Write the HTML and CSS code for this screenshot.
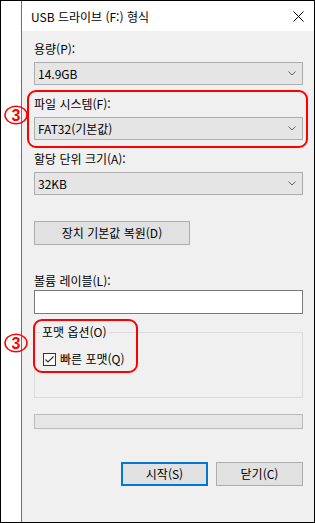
FILE: index.html
```html
<!DOCTYPE html>
<html lang="ko">
<head>
  <meta charset="UTF-8">
  <meta name="viewport" content="width=device-width, initial-scale=1.0">
  <title>USB 드라이브 (F:) 형식</title>
  <link rel="stylesheet" href="styles.css">
</head>
<body>
  <div class="frame">
    <div class="gutter"></div>

    <div class="window">
      <div class="titlebar">
        <span class="title">USB 드라이브 (F:) 형식</span>
        <svg class="close" width="11" height="11" viewBox="0 0 11 11">
          <path d="M0.5 0.5 L10.5 10.5 M10.5 0.5 L0.5 10.5" stroke="#000" stroke-width="1" fill="none"/>
        </svg>
      </div>

      <div class="content">
        <div class="field">
          <div class="label">용량(P):</div>
          <div class="combo">
            <span>14.9GB</span>
            <svg class="chevron" width="8" height="5" viewBox="0 0 8 5"><path d="M0.5 0.5 L4 4 L7.5 0.5" stroke="#606060" fill="none"/></svg>
          </div>
        </div>

        <div class="field">
          <div class="label">파일 시스템(F):</div>
          <div class="combo">
            <span>FAT32(기본값)</span>
            <svg class="chevron" width="8" height="5" viewBox="0 0 8 5"><path d="M0.5 0.5 L4 4 L7.5 0.5" stroke="#606060" fill="none"/></svg>
          </div>
        </div>

        <div class="field">
          <div class="label">할당 단위 크기(A):</div>
          <div class="combo">
            <span>32KB</span>
            <svg class="chevron" width="8" height="5" viewBox="0 0 8 5"><path d="M0.5 0.5 L4 4 L7.5 0.5" stroke="#606060" fill="none"/></svg>
          </div>
        </div>

        <button class="btn restore">장치 기본값 복원(D)</button>

        <div class="label volume-label">볼륨 레이블(L):</div>
        <div class="textbox"></div>

        <fieldset class="group">
          <legend>포맷 옵션(O)</legend>
          <div class="check-row">
            <span class="checkbox">
              <svg width="11" height="11" viewBox="0 0 11 11"><path d="M1.5 5.5 L4 8 L9.5 2.5" stroke="#333" stroke-width="1.2" fill="none"/></svg>
            </span>
            <span>빠른 포맷(Q)</span>
          </div>
        </fieldset>

        <div class="progress"></div>

        <div class="actions">
          <button class="btn primary">시작(S)</button>
          <button class="btn">닫기(C)</button>
        </div>
      </div>
    </div>

    <!-- annotation marks -->
    <div class="mark mark-fs"></div>
    <div class="mark mark-options"></div>
    <svg class="badge badge-fs" width="24" height="20" viewBox="0 0 24 20">
      <ellipse cx="12" cy="10" rx="11" ry="8.8" stroke="#f00" stroke-width="1.5" fill="none"/>
      <text x="12" y="15.5" text-anchor="middle">3</text>
    </svg>
    <svg class="badge badge-options" width="24" height="20" viewBox="0 0 24 20">
      <ellipse cx="12" cy="10" rx="11" ry="8.8" stroke="#f00" stroke-width="1.5" fill="none"/>
      <text x="12" y="15.5" text-anchor="middle">3</text>
    </svg>
  </div>
</body>
</html>
```

FILE: styles.css
```css
html, body {
  margin: 0;
  padding: 0;
}

body {
  font-family: "Noto Sans CJK KR", "Liberation Sans", sans-serif;
  font-size: 12px;
  color: #000;
  background-color: #fff;
}

.frame {
  position: relative;
  width: 315px;
  height: 523px;
  box-sizing: border-box;
  border: 1px solid #000;
  display: flex;
  background-color: #fff;
}

.gutter {
  width: 20px;
  flex-shrink: 0;
}

.window {
  flex: 1;
  display: flex;
  flex-direction: column;
  border-left: 1px solid #6f6f6f;
  background-color: #f0f0f0;
}

.titlebar {
  height: 30px;
  display: flex;
  align-items: center;
  justify-content: space-between;
  padding: 1px 10px 0 9px;
  box-sizing: border-box;
  background-color: #fff;
}

.title {
  line-height: 16px;
}

.close {
  display: block;
}

.content {
  flex: 1;
  display: flex;
  flex-direction: column;
  padding: 10px 11px 0 12px;
}

.label {
  line-height: 16px;
  height: 16px;
}

.field + .field {
  margin-top: 11px;
}

.combo {
  margin-top: 5px;
  height: 23px;
  box-sizing: border-box;
  border: 1px solid #adadad;
  background-color: #e5e5e5;
  display: flex;
  align-items: center;
  justify-content: space-between;
  padding: 0 6px 0 3px;
  line-height: 16px;
}

.chevron {
  display: block;
}

.btn {
  font-family: inherit;
  font-size: 12px;
  color: #000;
  height: 24px;
  padding: 0;
  box-sizing: border-box;
  border: 1px solid #adadad;
  background-color: #e1e1e1;
  line-height: 16px;
}

.restore {
  align-self: flex-start;
  margin-top: 26px;
  width: 156px;
}

.volume-label {
  margin-top: 28px;
}

.textbox {
  margin-top: 1px;
  height: 24px;
  box-sizing: border-box;
  border: 1px solid #7a7a7a;
  background-color: #fff;
}

.group {
  margin: 10px 0 0 0;
  padding: 11px 5px 30px 5px;
  border: 1px solid #dcdcdc;
  min-width: 0;
}

.group legend {
  padding: 0 2px;
  line-height: 16px;
}

.check-row {
  display: flex;
  align-items: center;
  gap: 4px;
  margin-left: 3px;
  line-height: 16px;
}

.checkbox {
  width: 13px;
  height: 13px;
  box-sizing: border-box;
  border: 1px solid #333;
  background-color: #fff;
  display: flex;
  align-items: center;
  justify-content: center;
}

.checkbox svg {
  display: block;
}

.progress {
  margin-top: 16px;
  height: 15px;
  box-sizing: border-box;
  border: 1px solid #bcbcbc;
  background-color: #e6e6e6;
}

.actions {
  margin-top: 33px;
  display: flex;
  justify-content: flex-end;
  gap: 8px;
}

.actions .btn {
  width: 87px;
}

.btn.primary {
  border: 2px solid #0078d7;
}

/* red annotation marks */
.mark {
  position: absolute;
  box-sizing: border-box;
  border: 2px solid #f00;
  border-radius: 9px;
}

.mark-fs {
  left: 26px;
  top: 89px;
  width: 281px;
  height: 58px;
}

.mark-options {
  left: 32px;
  top: 318px;
  width: 105px;
  height: 54px;
}

.badge {
  position: absolute;
  left: 3px;
}

.badge text {
  font-family: "Liberation Sans", sans-serif;
  font-size: 16px;
  font-weight: bold;
  fill: #f00;
}

.badge-fs {
  top: 104px;
}

.badge-options {
  top: 332px;
}
```
